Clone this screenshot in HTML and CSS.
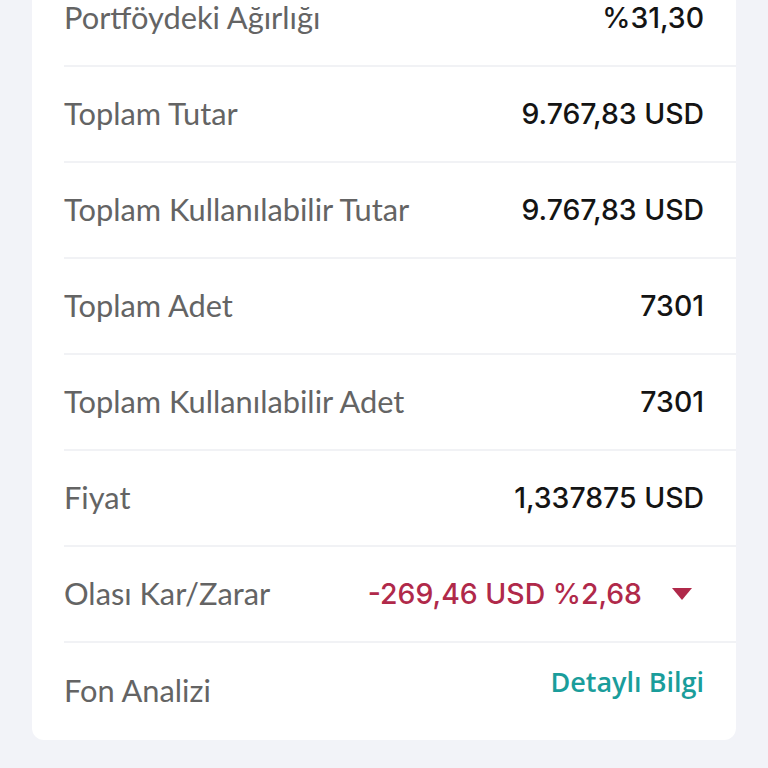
FILE: index.html
```html
<!DOCTYPE html>
<html lang="tr">
<head>
<meta charset="utf-8">
<link rel="stylesheet" href="styles.css">
</head>
<body>
<div class="card">
  <div class="row"><span class="label">Portföydeki Ağırlığı</span><span class="value">%31,30</span></div>
  <div class="row"><span class="label">Toplam Tutar</span><span class="value">9.767,83 USD</span></div>
  <div class="row"><span class="label">Toplam Kullanılabilir Tutar</span><span class="value">9.767,83 USD</span></div>
  <div class="row"><span class="label">Toplam Adet</span><span class="value">7301</span></div>
  <div class="row"><span class="label">Toplam Kullanılabilir Adet</span><span class="value">7301</span></div>
  <div class="row"><span class="label">Fiyat</span><span class="value">1,337875 USD</span></div>
  <div class="row"><span class="label">Olası Kar/Zarar</span><span class="value loss">-269,46 USD %2,68<span class="tri"></span></span></div>
  <div class="row last"><span class="label">Fon Analizi</span><span class="link">Detaylı Bilgi</span></div>
</div>
</body>
</html>
```
FILE: styles.css
```css
html, body {
  margin: 0;
  padding: 0;
  background: #f2f3f8;
  overflow: hidden;
}
body {
  height: 768px;
}
.card {
  margin: -29px 32px 0 32px;
  padding-left: 32px;
  background: #ffffff;
  border-radius: 0 0 12px 12px;
}
.row {
  height: 94px;
  border-bottom: 2px solid #f1f2f5;
  display: flex;
  align-items: center;
  justify-content: space-between;
  padding-right: 32px;
}
.row.last {
  height: 97px;
  border-bottom: none;
}
.label {
  font-family: "Lato", "Liberation Sans", sans-serif;
  font-size: 30.8px;
  color: #646464;
  line-height: 1;
}
.value {
  font-family: "Inter", "Liberation Sans", sans-serif;
  font-size: 28.4px;
  font-weight: 500;
  color: #141414;
  line-height: 1;
  display: flex;
  align-items: center;
}
.value.loss {
  color: #b0294a;
}
.tri {
  width: 0;
  height: 0;
  border-left: 10px solid transparent;
  border-right: 10px solid transparent;
  border-top: 12px solid #b0294a;
  margin-left: 30px;
  margin-right: 12px;
}
.link {
  font-family: "Open Sans", "Noto Sans", sans-serif;
  font-size: 27px;
  font-weight: 600;
  color: #1a9d9b;
  line-height: 1;
  margin-top: -11px;
  margin-bottom: 10px;
}
```
